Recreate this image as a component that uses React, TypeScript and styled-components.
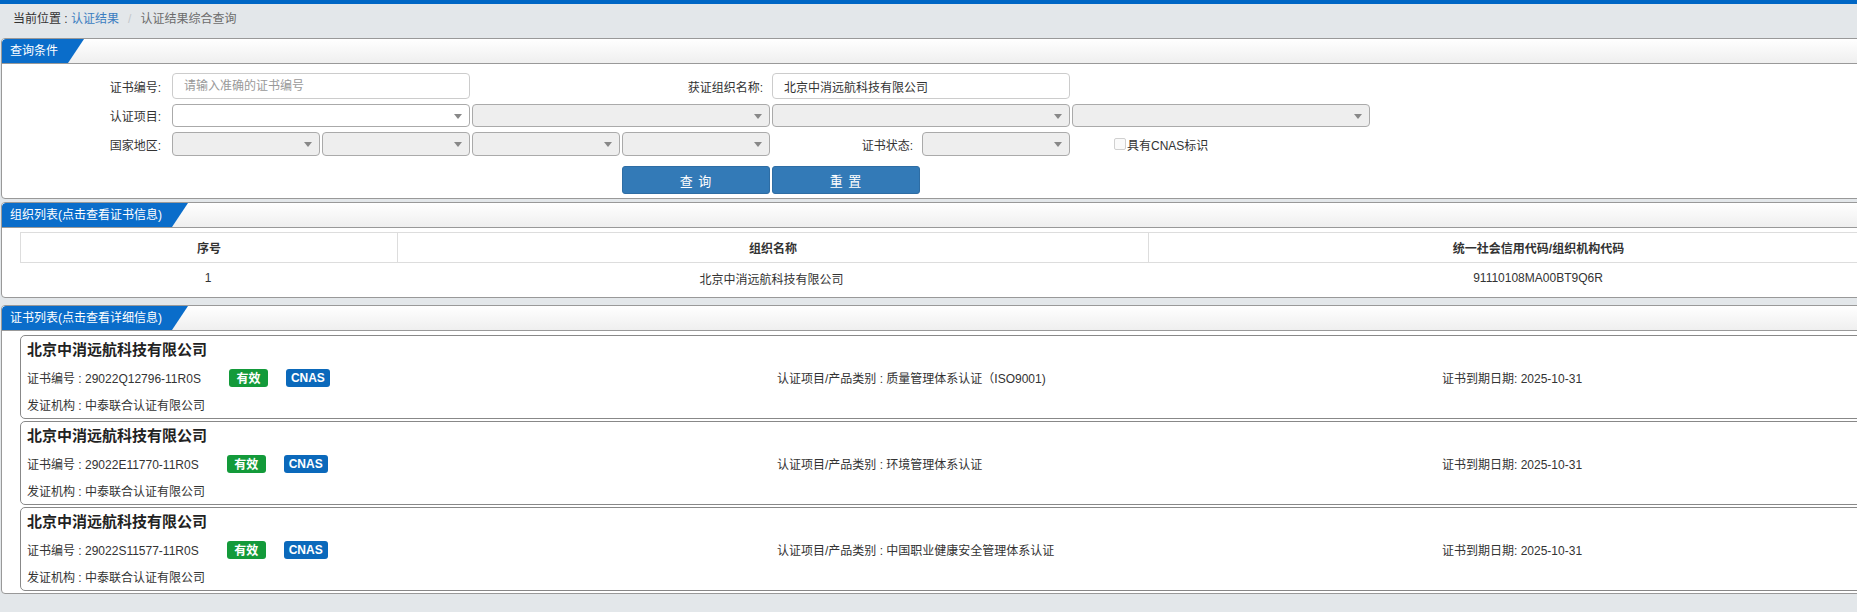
import React from 'react';
import styled, {createGlobalStyle} from 'styled-components';

const GlobalStyle = createGlobalStyle`
  html, body {
    margin: 0;
    padding: 0;
    overflow: hidden;
    background: #e3e7ea;
  }
  body {
    font-family: "Liberation Sans", "Noto Sans CJK SC", sans-serif;
    font-size: 12px;
    color: #333;
  }
`;

interface ICert {
    no: string;
    item: string;
}

const certs: ICert[] = [
    {no: '29022Q12796-11R0S', item: '质量管理体系认证（ISO9001)'},
    {no: '29022E11770-11R0S', item: '环境管理体系认证'},
    {no: '29022S11577-11R0S', item: '中国职业健康安全管理体系认证'},
];

export default function App() {

    const renderQuery = () => {
        return <Panel $gap={3}>
            <PanelHead><Tab>查询条件</Tab></PanelHead>
            <Form>
                <Label $first>证书编号:</Label>
                <Input $span={2} placeholder="请输入准确的证书编号"/>
                <Label $span={2} $pad={7}>获证组织名称:</Label>
                <Input $span={2} defaultValue="北京中消远航科技有限公司"/>

                <Label $first>认证项目:</Label>
                <Select $span={2} $white/>
                <Select $span={2}/>
                <Select $span={2}/>
                <Select $span={2}/>

                <Label $first>国家地区:</Label>
                <Select/>
                <Select/>
                <Select/>
                <Select/>
                <Label $pad={7}>证书状态:</Label>
                <Select/>
                <CheckCell>
                    <CheckBox/>具有CNAS标识
                </CheckCell>

                <Button $col={5}>查 询</Button>
                <Button $col={6}>重 置</Button>
            </Form>
        </Panel>;
    };

    const renderOrg = () => {
        return <Panel $gap={7}>
            <PanelHead><Tab>组织列表(点击查看证书信息)</Tab></PanelHead>
            <Table>
                <HeadRow>
                    <HeadCell>序号</HeadCell>
                    <HeadCell>组织名称</HeadCell>
                    <HeadCell>统一社会信用代码/组织机构代码</HeadCell>
                </HeadRow>
                <DataRow>
                    <DataCell>1</DataCell>
                    <DataCell>北京中消远航科技有限公司</DataCell>
                    <DataCell>91110108MA00BT9Q6R</DataCell>
                </DataRow>
            </Table>
        </Panel>;
    };

    const renderCerts = () => {
        return <Panel $gap={0}>
            <PanelHead><Tab>证书列表(点击查看详细信息)</Tab></PanelHead>
            <CardList>
                {certs.map(row => {
                    return <Card key={row.no}>
                        <CardTitle>北京中消远航科技有限公司</CardTitle>
                        <CardGrid>
                            <Cell>
                                证书编号 : {row.no}
                                <Badge $color="#139a3a" $w={39}>有效</Badge>
                                <Badge $color="#0b69bb" $w={44} $gap={18}>CNAS</Badge>
                            </Cell>
                            <Cell>认证项目/产品类别 : {row.item}</Cell>
                            <Cell>证书到期日期: 2025-10-31</Cell>
                            <Cell>发证机构 : 中泰联合认证有限公司</Cell>
                        </CardGrid>
                    </Card>;
                })}
            </CardList>
        </Panel>;
    };

    return (
        <Page>
            <GlobalStyle/>
            <TopBar/>
            <Crumb>
                当前位置 : <CrumbLink>认证结果</CrumbLink>
                <CrumbSep>/</CrumbSep>
                <CrumbCurrent>认证结果综合查询</CrumbCurrent>
            </Crumb>
            {renderQuery()}
            {renderOrg()}
            {renderCerts()}
        </Page>
    );
}


// the page is wider than the window; the right side is cut off as in the original
const Page = styled.div`
  width: 100%;
  overflow: hidden;
  min-height: 612px;
  background: #e3e7ea;
`;

const TopBar = styled.div`
  height: 4px;
  background: #0067c5;
`;

const Crumb = styled.div`
  height: 34px;
  box-sizing: border-box;
  padding: 7px 0 0 13px;
  line-height: 16px;
  font-size: 12px;
  color: #333;
`;

const CrumbLink = styled.span`
  color: #3b7dc0;
`;

const CrumbSep = styled.span`
  color: #c4c8cc;
  margin: 0 9px;
`;

const CrumbCurrent = styled.span`
  color: #6c6c6c;
`;

const Panel = styled.section<{ $gap: number }>`
  margin: 0 0 ${p => p.$gap}px 1px;
  width: 1945px;
  background: #fff;
  border: 1px solid #999;
  border-radius: 4px;
  overflow: hidden;
`;

const PanelHead = styled.div`
  height: 24px;
  border-bottom: 1px solid #999;
  background: linear-gradient(#ffffff, #efefef);
  display: flex;
`;

const Tab = styled.div`
  height: 24px;
  line-height: 24px;
  padding: 0 26px 0 8px;
  background: #0a6dca;
  color: #fff;
  font-size: 12px;
  border-top-left-radius: 4px;
  clip-path: polygon(0 0, 100% 0, calc(100% - 16px) 100%, 0 100%);
`;

const Form = styled.div`
  display: grid;
  grid-template-columns: 168px repeat(8, 148px);
  grid-template-rows: 26px 23px 24px auto;
  column-gap: 2px;
  row-gap: 5px;
  padding: 9px 0 4px;
  align-items: center;
`;

const Label = styled.div<{ $span?: number; $pad?: number; $first?: boolean }>`
  grid-column: ${p => p.$first ? '1 /' : ''} span ${p => p.$span ?? 1};
  text-align: right;
  padding-right: ${p => p.$pad ?? 9}px;
  color: #333;
  white-space: nowrap;
`;

const Input = styled.input<{ $span?: number }>`
  grid-column: span ${p => p.$span ?? 1};
  height: 26px;
  box-sizing: border-box;
  border: 1px solid #ccc;
  border-radius: 4px;
  padding: 0 11px;
  font: inherit;
  color: #333;
  outline: none;

  &::placeholder {
    color: #999;
  }
`;

const Select = styled.div<{ $span?: number; $white?: boolean }>`
  grid-column: span ${p => p.$span ?? 1};
  height: 100%;
  box-sizing: border-box;
  border: 1px solid #aaa;
  border-radius: 4px;
  background: ${p => p.$white ? '#fff' : '#eee'};
  position: relative;

  &:after {
    content: '';
    position: absolute;
    right: 7px;
    top: 50%;
    margin-top: -2px;
    border-left: 4px solid transparent;
    border-right: 4px solid transparent;
    border-top: 5px solid #888;
  }
`;

const CheckCell = styled.label`
  grid-column: span 2;
  display: flex;
  align-items: center;
  padding-left: 42px;
  color: #333;
`;

const CheckBox = styled.span`
  width: 10px;
  height: 10px;
  border: 1px solid #d0d0d0;
  border-radius: 2px;
  background: #fafafa;
  margin-right: 1px;
`;

const Button = styled.button<{ $col: number }>`
  grid-column: ${p => p.$col} / span 1;
  grid-row: 4;
  margin-top: 5px;
  height: 28px;
  border: 1px solid #2e6da4;
  border-radius: 3px;
  background: #337ab7;
  color: #fff;
  font: inherit;
  font-size: 13px;
  letter-spacing: 1px;
`;

const Table = styled.div`
  margin: 4px 18px 4px;
`;

const HeadRow = styled.div`
  display: grid;
  grid-template-columns: 376px 751px 1fr;
  height: 29px;
  border: 1px solid #ddd;
`;

const HeadCell = styled.div`
  display: flex;
  align-items: center;
  justify-content: center;
  font-weight: bold;
  color: #333;
  & + & {
    border-left: 1px solid #ddd;
  }
`;

const DataRow = styled.div`
  display: grid;
  grid-template-columns: 376px 751px 1fr;
  height: 30px;
`;

const DataCell = styled.div`
  display: flex;
  align-items: center;
  justify-content: center;
  color: #333;
`;

const CardList = styled.div`
  padding: 4px 18px 0;
`;

const Card = styled.div`
  border: 1px solid #888;
  border-radius: 5px;
  margin-bottom: 2px;
  padding: 4px 6px 0;
`;

const CardTitle = styled.div`
  font-size: 15px;
  font-weight: bold;
  line-height: 20px;
  margin-bottom: 4px;
  color: #222;
`;

const CardGrid = styled.div`
  display: grid;
  grid-template-columns: 750px 665px 1fr;
  grid-auto-rows: 27px;
  align-items: center;
`;

const Cell = styled.div`
  display: flex;
  align-items: center;
  color: #333;
  white-space: nowrap;
`;

const Badge = styled.span<{ $color: string; $w: number; $gap?: number }>`
  display: inline-flex;
  align-items: center;
  justify-content: center;
  width: ${p => p.$w}px;
  height: 18px;
  margin-left: ${p => p.$gap ?? 28}px;
  border-radius: 3px;
  background: ${p => p.$color};
  color: #fff;
  font-weight: bold;
  font-size: 12px;
`;
